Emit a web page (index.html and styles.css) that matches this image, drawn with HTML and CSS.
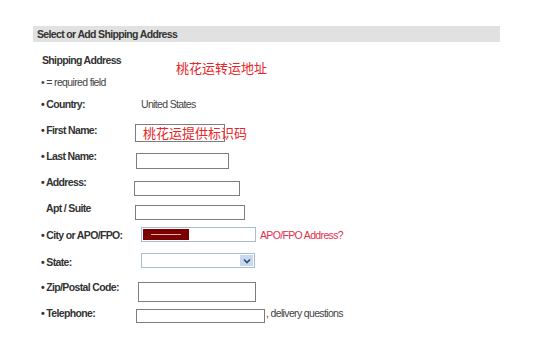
FILE: index.html
```html
<!DOCTYPE html>
<html>
<head>
<meta charset="utf-8">
<link rel="stylesheet" href="styles.css">
</head>
<body>
<div class="page">
  <div class="bar">Select or Add Shipping Address</div>
  <div class="form">
    <div class="row short"><span class="label title">Shipping Address</span></div>
    <div class="row short"><span class="note">• = required field</span></div>
    <div class="row mid"><span class="label">• Country:</span><span class="value v6">United States</span></div>
    <div class="row"><span class="label">• First Name:</span><span class="box f-first"></span></div>
    <div class="row"><span class="label">• Last Name:</span><span class="box f-last"></span></div>
    <div class="row"><span class="label">• Address:</span><span class="box f-addr"></span></div>
    <div class="row tall"><span class="label apt">Apt / Suite</span><span class="box f-apt"></span></div>
    <div class="row tall"><span class="label">• City or APO/FPO:</span><span class="box blue f-city"><span class="mark"><i></i></span></span><span class="link">APO/FPO Address?</span></div>
    <div class="row low"><span class="label">• State:</span><span class="select"><span class="arrow"><svg width="8" height="6" viewBox="0 0 8 6"><path d="M1 1.5 L4 4.5 L7 1.5" fill="none" stroke="#2a4a7a" stroke-width="1.6"/></svg></span></span></div>
    <div class="row"><span class="label">• Zip/Postal Code:</span><span class="box f-zip"></span></div>
    <div class="row"><span class="label">• Telephone:</span><span class="box f-tel"></span><span class="after">, delivery questions</span></div>
  </div>
  <div class="red r1">桃花运转运地址</div>
  <div class="red r2">桃花运提供标识码</div>
</div>
</body>
</html>
```
FILE: styles.css
```css
html, body { margin: 0; padding: 0; background: #fff; }
body { font-family: "Liberation Sans", Arial, sans-serif; font-size: 10.5px; letter-spacing: -0.65px; color: #333; }
.page { position: relative; width: 541px; height: 345px; padding: 26px 0 0 33px; box-sizing: border-box; }
.bar { width: 463px; height: 16px; line-height: 16px; background: #e1e1e1; font-weight: bold; padding-left: 4px; color: #333; }
.form { padding: 7px 0 0 8px; }
.row { display: flex; align-items: flex-start; height: 26px; line-height: 26px; }
.row.short { height: 22px; line-height: 22px; }
.row.mid { height: 24px; line-height: 22px; }
.row.tall { height: 27px; }
.row.low { height: 25px; }
.label { width: 94px; flex: none; font-weight: bold; color: #333; white-space: nowrap; }
.label.title { padding-left: 1px; }
.label.apt { padding-left: 5px; width: 89px; }
.note { color: #444; }
.value { color: #444; }
.v6 { margin-left: 6px; }
.box { display: block; flex: none; border: 1px solid #7d7d7d; background: #fff; }
.f-first { width: 88px; height: 16px; margin-top: 7px; }
.f-last { width: 91px; height: 14px; margin-top: 10px; margin-left: 1px; }
.f-addr { width: 104px; height: 13px; margin-top: 12px; margin-left: -1px; }
.f-apt { width: 108px; height: 13px; margin-top: 10px; }
.f-city { width: 113px; height: 13px; margin-top: 5px; margin-left: 6px; }
.f-zip { width: 116px; height: 18px; margin-top: 8px; margin-left: 3px; }
.f-tel { width: 127px; height: 12px; margin-top: 9px; margin-left: 1px; }
.box.blue { border-color: #a9bcd4; position: relative; }
.mark { position: absolute; left: 1px; top: 1px; width: 46px; height: 11px; background: #7b0000; display: flex; align-items: center; justify-content: center; }
.mark i { display: block; width: 30px; height: 1px; background: #d8b0b0; }
.link { margin-left: 4px; color: #e0304f; }
.select { position: relative; display: block; flex: none; width: 112px; height: 13px; margin-top: 4px; margin-left: 6px; border: 1px solid #a9bcd4; background: #fff; }
.arrow { position: absolute; right: 1px; top: 1px; width: 13px; height: 11px; background: #c8d8ee; display: flex; align-items: center; justify-content: center; }
.after { margin-left: 1px; color: #444; }
.red { position: absolute; color: #e8262a; font-family: "Noto Sans CJK SC", sans-serif; font-size: 13px; line-height: 16px; letter-spacing: 0; }
.r1 { left: 176px; top: 60px; }
.r2 { left: 143px; top: 125px; }
```
